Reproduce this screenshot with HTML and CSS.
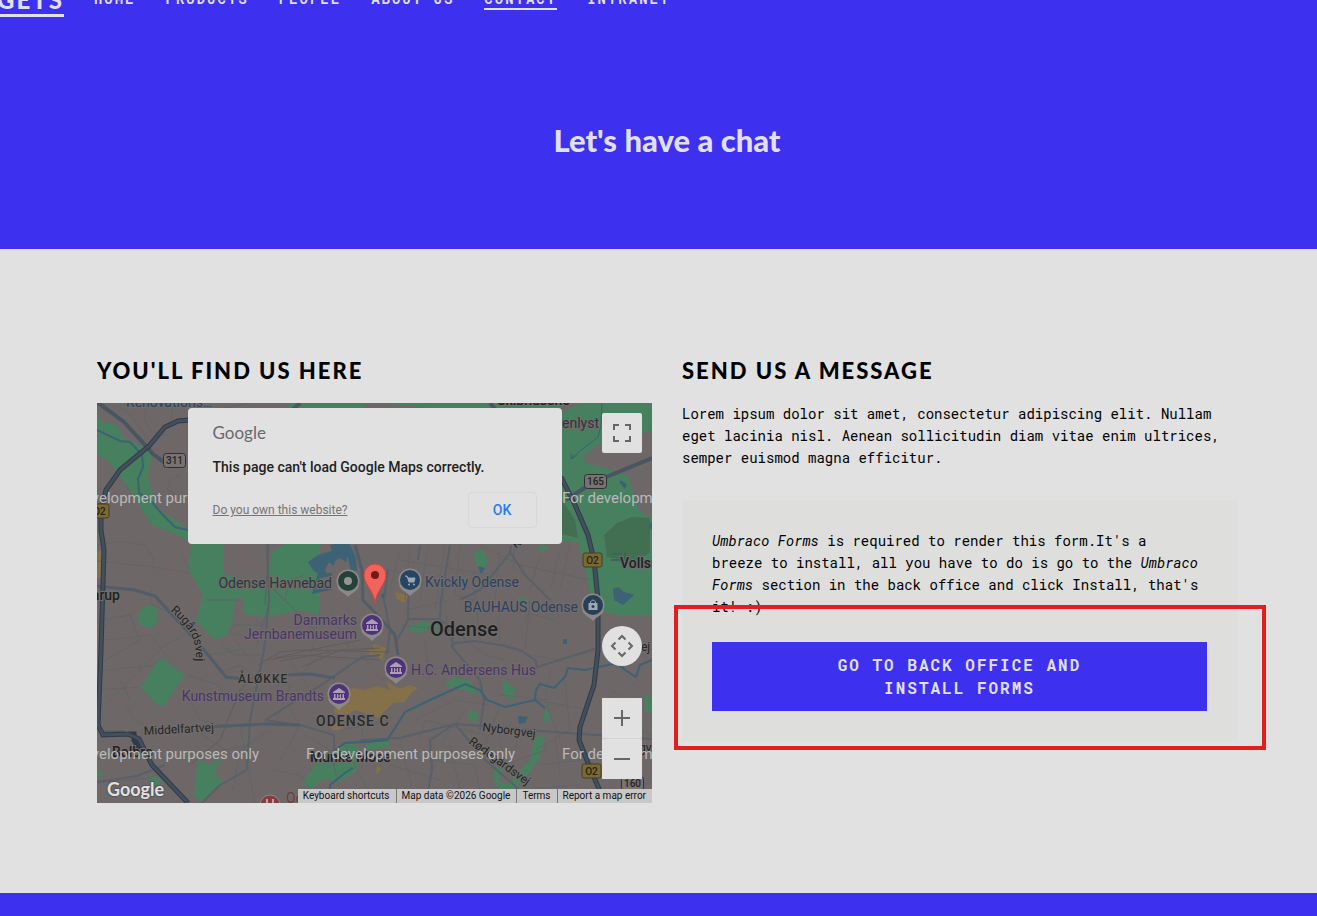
FILE: index.html
```html
<!DOCTYPE html>
<html lang="en">
<head>
<meta charset="utf-8">
<title>Contact</title>
<link rel="stylesheet" href="styles.css">
</head>
<body>
<header class="hero">
  <nav class="nav">
    <a class="logo" href="#">GETS</a>
    <a href="#">Home</a>
    <a href="#">Products</a>
    <a href="#">People</a>
    <a href="#">About us</a>
    <a class="active" href="#">Contact</a>
    <a href="#">Intranet</a>
  </nav>
  <h1 class="hero-title">Let's have a chat</h1>
</header>

<main class="content">
  <section class="column">
    <h2 class="heading">You'll find us here</h2>
    <div class="map">
      <svg class="map-canvas" viewBox="97 403 555 400" preserveAspectRatio="xMidYMid slice" role="img" aria-label="Map of Odense">
        <defs>
          <path id="rug" d="M170 611 Q188 626 192 637 Q196 645 196 660"/>
          <g id="drop"><path d="M-11 5C-9 11-3 12 0 16C3 12 9 11 11 5Z" fill="#8c8988"/><circle r="11.500" fill="#8c8988"/></g>
          <g id="museum"><use href="#drop"/><circle r="10" fill="#50327a"/><path d="M-6-2L0-6L6-2V-1H-6ZM-5 0H-3.500V4H-5ZM3.500 0H5V4H3.500ZM-6 4H6V6H-6ZM-2 0H-1V1.500H1V0H2V4H1V2.500H-1V4H-2Z" fill="#aaa1b5"/></g>
          <g id="o2"><rect width="19" height="14" rx="2" fill="#7a6930" stroke="#463e25"/><text x="9.500" y="11" text-anchor="middle" class="road-no gold">O2</text></g>
        </defs>
        <rect x="97" y="403" width="555" height="400" fill="#6d6867"/>
        <g fill="#47805f">
          <path d="M97 415L102 422L117 425L123 437L153 452L148 475L154 500L158 509L180 523L190 533V541L165 530L152 525L130 490L117 472L106 459L97 455Z"/>
          <path d="M290 403H368L360 412H288ZM378 403H652V433L605 440L583 457L587 464L650 470L628 474L639 510L652 518V616L641 616L620 616L600 611L590 596L586 570L578 542L562 541V420Z"/>
          <path d="M192 541H224V574L243 580H268L272 552L290 541H320V615L300 610L288 613L265 617L244 614L243 600L239 596L235 602L232 622L227 635L215 640L196 621L203 595L188 568Z"/>
          <path d="M139 612L147 605L158 608L156 616L159 618L152 629L138 624ZM160 657L185 675L170 696L165 706L156 704L141 687ZM197 769L198 760L210 765L222 758L214 774L223 782L213 790L202 802L194 796ZM97 770L103 772L97 780ZM150 774L162 780L158 786L149 782Z"/>
          <path d="M302 784L315 765L333 751L345 745L353 743L360 750L358 770L340 782L322 779L312 789ZM365 743L389 741V747L369 750ZM409 625L428 621L432 627L420 633L410 631ZM432 621L439 620L438 632L433 634ZM445 683L455 677L470 681L478 695L465 690L448 688ZM502 680L515 688L513 700L504 696ZM470 710L479 714L476 723L468 718ZM545 710L551 713L549 723L543 720ZM495 768L506 765L498 780L515 790L502 792L493 779ZM535 737L545 736L540 757L525 780L511 790L507 785L530 760ZM644 695L652 698V714L646 711ZM474 552L483 549L488 562L483 574L477 566ZM540 545L550 547L540 553ZM518 597L529 600L526 607L515 603Z"/>
        </g>
        <g fill="#6d6867">
          <path d="M583 457L605 440L632 437L652 430V465L628 475L622 474L597 465ZM628 475L652 466V519L639 510ZM560 403H582L562 413Z"/>
        </g>
        <path d="M562 500L575 520L578 538L562 534ZM604 535L617 523L632 517L650 518V552L637 562L607 557Z" fill="#426e52"/>
        <path d="M612 554H622M611 560H625V552" stroke="#3b6752" fill="none" stroke-width="2"/>
        <path d="M308 562L318 555L332 551L330 545L341 543L348 553L346 562L340 558L336 560L333 566L329 562L325 570L328 577L319 575L313 570ZM341 543L349 542L356 558L357 571L351 570L348 558ZM613 589L618 587L624 592L634 595L623 605L614 600ZM518 716L528 717L525 723L519 724ZM563 639H567V644H563ZM478 566L485 568L481 575ZM652 530L648 526L652 522ZM620 480L627 484L625 489L620 483ZM383 593L386 596L383 599L381 596Z" fill="#3b6275"/>
        <path d="M319 575L314 592L332 588M318 577L332 574" stroke="#3b6275" fill="none" stroke-width="3"/>
        <g fill="#84714a">
          <path d="M97 552L101 551V578L97 578ZM336 704L341 694L353 688L365 690L377 686L390 690L386 681L391 684L400 689L409 685L418 688L411 693L405 702L393 703L385 711L378 718L355 710L345 718L334 712ZM373 644L386 648L382 660L376 655ZM395 592L409 596L404 603L397 599ZM368 650H383V655H370Z"/>
          <path d="M332 724L340 723L344 730L332 730ZM377 765L381 769L376 774Z"/>
        </g>
        <g fill="none" stroke="#626468" stroke-width="1">
          <path d="M97 545L120 541L145 545L153 557V565M97 561L145 566L190 573M115 403L130 415L152 445M147 403L144 418L150 431L170 436M172 403V420M250 403L224 408M180 475L170 480L167 490L188 500M180 550L190 570M100 620L130 615L140 640L97 665M150 590L152 605L170 612M103 670L150 666L165 657M97 690L140 687M125 704L135 720L150 729M105 705L115 695L165 645L185 635M120 680L130 700M103 640L150 635L170 660M190 700L200 720L225 725M187 675L218 685L228 700M198 640L207 655L240 650M233 625H262L265 635H230ZM205 600L240 600M215 675L240 665L260 680M220 643L234 655H260M255 680L290 685L275 725M285 600L290 580L305 575M290 660L310 690L330 680M285 700L300 725L280 760M233 790L240 750L270 730M97 783L150 778L165 769M240 725L255 805M195 730L225 750L250 745M305 735L330 750L340 790M270 770L300 775L320 802M345 745L375 805M400 550L390 590M400 560L490 575M410 545L405 600M428 545L420 600M445 545L435 610M460 545L455 595M390 570L480 590M500 550L495 600M480 545L520 565M515 545L513 570M540 555L530 590M560 550L550 590M570 545L560 590M520 565L590 580M455 595L555 620M440 575L450 640M475 590L480 640M498 600L500 640M530 600L525 650M405 610L450 600M400 625L470 632M460 635L485 655L505 660M495 640L530 655L560 660M380 680L420 670L470 665M425 640L430 680M415 720L455 700L490 705M420 740L425 720L485 735M440 745L465 710M450 745L460 790M487 740L500 705M430 760L475 765L480 790M390 765L440 780M400 740L415 800M500 740L505 765L545 750M520 725L515 750M535 700L590 710M550 675L545 700L560 740M565 680L570 730L535 750M500 695L550 700M515 790L580 785M540 765L585 760M555 735L560 775M450 790L520 803M610 690L640 705M605 640L652 650M610 660L640 690M605 715L652 735M602 740L640 790M620 800L652 780M320 655L300 675M350 640L370 665M330 610L350 650M270 600L255 650M235 640L250 660M255 620L290 640M320 610L310 660M340 730L390 720M360 720L365 750M390 790L440 800M305 790L330 800"/>
        </g>
        <g fill="none" stroke="#58606a" stroke-width="2">
          <path d="M267 541L269 600L264 650L250 720L247 770M388 569L384 600L390 630L387 655M409 575L408 620L396 642M409 619L440 619L453 630L452 647L480 680L484 700L480 730M452 647L455 643L475 641L500 645L520 650L535 660L537 667L598 648M265 720L320 686L362 657L380 655M265 720L300 725L334 735L334 765M360 740L400 738L455 724L485 726L540 731L652 739M455 724L430 740L432 770L426 803M455 724L485 760L535 803M420 545L418 560M511 545L510 553L480 590L460 600M511 553L525 575L550 600M247 770L220 785L202 803M97 782L137 776L165 765M440 619L441 600L450 545"/>
        </g>
        <path d="M97 586L135 590L155 596L177 620L200 645L226 677L242 679M282 675L310 674L335 678M103 732L125 732M208 727L265 724L300 725M355 545L362 570L363 600L380 618L395 635L398 655" fill="none" stroke="#515d69" stroke-width="3"/>
        <path d="M269 541L265 605M269 585L305 620L320 635M258 665L280 652L300 650L390 652M265 660L300 655L380 660M275 658L310 650L360 640M280 661L330 652M302 667L340 650L380 648M260 670L240 690L220 740L190 765" fill="none" stroke="#605d5d" stroke-width="1"/>
        <path d="M97 430L120 441L130 442L142 455L143 467L138 479L139 493L150 500L162 514L175 527L188 530M329 803L330 785L345 773L353 768M335 750L345 743L365 742L387 740L395 728L405 712L430 700L465 684L480 690L487 700L505 707L535 700L545 708M535 700L536 690L540 684L554 688L565 677L568 668L585 670L617 663L625 670L636 677L640 665L652 660" fill="none" stroke="#3b6275" stroke-width="2"/>
        <path d="M602 403L601 425L598 437L570 459M571 453L572 459L577 455" fill="none" stroke="#3b6275"/>
        <path d="M97 402L124 422L145 445L153 454L165 463M300 403L292 410M566 500L592 483L652 458M490 403L495 409" fill="none" stroke="#495563" stroke-width="4"/>
        <path d="M190 420L178 421L165 427L149 446L120 470L106 490L101 510V530L104 550L101 650L98 725L103 735L128 734L139 739L152 765L188 803M128 734H134V740L139 750" fill="none" stroke="#303a47" stroke-width="5"/>
        <path d="M190 420L178 421L165 427L149 446L120 470L106 490L101 510V530L104 550L101 650L98 725L103 735L128 734L139 739L152 765L188 803" fill="none" stroke="#444f5d" stroke-width="3"/>
        <path d="M561 477L575 505L588 535L594 560L598 600V650L594 685L580 727L579 740L588 763L605 803" fill="none" stroke="#303a47" stroke-width="5"/>
        <path d="M561 477L575 505L588 535L594 560L598 600V650L594 685L580 727L579 740L588 763L605 803" fill="none" stroke="#444f5d" stroke-width="3"/>

        <g class="labels">
          <text x="126" y="407" class="shop">Renovations…</text>
          <text x="497" y="405" class="town">Skibhusene</text>
          <text x="562" y="428" class="place">enlyst</text>
          <text x="620" y="568" class="town">Vollsmose</text>
          <text x="120" y="600" text-anchor="end" class="town">Tarup</text>
          <text x="112" y="757" class="town">Bolbro</text>
          <text x="310" y="762" class="town">Munke Mose</text>
          <text x="332" y="588" text-anchor="end" class="place">Odense Havnebad</text>
          <text x="425" y="587" class="shop">Kvickly Odense</text>
          <text x="578" y="612" text-anchor="end" class="shop">BAUHAUS Odense</text>
          <text x="357" y="625" text-anchor="end" class="sight">Danmarks</text>
          <text x="357" y="639" text-anchor="end" class="sight">Jernbanemuseum</text>
          <text x="411" y="675" class="sight">H.C. Andersens Hus</text>
          <text x="324" y="701" text-anchor="end" class="sight">Kunstmuseum Brandts</text>
          <text x="286" y="803" class="clinic">Odense</text>
          <text x="430" y="636" class="city">Odense</text>
          <text x="316" y="726" class="district">ODENSE C</text>
          <text x="238" y="683" class="quarter">ÅLØKKE</text>
          <text class="street"><textPath href="#rug">Rugårdsvej</textPath></text>
          <text x="144" y="735" class="street" transform="rotate(-3 144 735)">Middelfartvej</text>
          <text x="482" y="731" class="street" transform="rotate(7 482 731)">Nyborgvej</text>
          <text x="468" y="743" class="street" transform="rotate(36 468 743)">Rødegårdsvej</text>
          <text x="641" y="651" class="street">ej</text>
          <text x="639" y="752" class="street">gvej</text>
          <text x="516" y="549" class="street" transform="rotate(-40 516 549)">K</text>
        </g>
        <g stroke="#30302f"><rect x="163.500" y="453.500" width="22" height="14" rx="3" fill="#777372"/><rect x="584.500" y="474.500" width="22" height="14" rx="3" fill="#777372"/><rect x="621.500" y="776.500" width="22" height="14" rx="3" fill="#777372"/></g>
        <text x="174.500" y="464" text-anchor="middle" class="road-no">311</text>
        <text x="595.500" y="485" text-anchor="middle" class="road-no">165</text>
        <text x="632.500" y="787" text-anchor="middle" class="road-no">160</text>
        <use href="#o2" x="583" y="553"/><use href="#o2" x="582" y="764"/><use href="#o2" x="90" y="504"/>

        <g transform="translate(348 581)"><use href="#drop"/><circle r="10" fill="#24413a"/><circle r="4" fill="#969492"/></g>
        <g transform="translate(410 580)"><use href="#drop"/><circle r="10" fill="#254564"/><path d="M-5-4H-3L-1 2H4L5-2H-2" fill="#a1a7b0" stroke="#a1a7b0"/><circle cx="-1" cy="4.500" r="1" fill="#a1a7b0"/><circle cx="4" cy="4.500" r="1" fill="#a1a7b0"/></g>
        <g transform="translate(593 605)"><use href="#drop"/><circle r="10" fill="#254057"/><path d="M-4.500-2H4.500V5H-4.500Z" fill="#a1a7b0"/><path d="M-2.500-2V-3Q0-7 2.500-3V-2" fill="none" stroke="#a1a7b0"/><circle cy="1.500" r="1.500" fill="#254057"/></g>
        <use href="#museum" x="372" y="625"/><use href="#museum" x="396" y="668"/><use href="#museum" x="339" y="694"/>
        <circle cx="270" cy="805" r="10" fill="#873d40" stroke="#8c8988"/><path d="M267 799V803M273 799V803" stroke="#b7a2a2" stroke-width="2"/>
        <path d="M375 604C374 590 364 585 364 575A11 11 0 0 1 386 575C386 585 376 590 375 604Z" fill="#f4635b" stroke="#c9453e"/>
        <circle cx="375" cy="575" r="4" fill="#721b17"/>
        <g class="watermark">
          <text x="50" y="503">For development purposes only</text><text x="562" y="503">For development purposes only</text>
          <text x="50" y="759">For development purposes only</text><text x="306" y="759">For development purposes only</text><text x="562" y="759">For development purposes only</text>
        </g>
        <text x="107" y="796" class="map-logo">Google</text>
      </svg>

      <div class="dialog" role="dialog" aria-label="Google Maps error">
        <div class="dialog-brand">Google</div>
        <p class="dialog-text">This page can't load Google Maps correctly.</p>
        <div class="dialog-row">
          <a class="dialog-link" href="#">Do you own this website?</a>
          <button class="dialog-ok" type="button">OK</button>
        </div>
      </div>

      <div class="controls">
        <button class="control" type="button" aria-label="Toggle fullscreen view">
          <svg width="40" height="40" viewBox="0 0 40 40"><path d="M12 17V12H17M23 12H28V17M28 23V28H23M17 28H12V23" fill="none" stroke="#666" stroke-width="2"/></svg>
        </button>
        <div class="controls-lower">
          <button class="control round" type="button" aria-label="Map camera controls">
            <svg width="40" height="40" viewBox="0 0 40 40"><path d="M16.500 13.500L20 10L23.500 13.500M26.500 16.500L30 20L26.500 23.500M23.500 26.500L20 30L16.500 26.500M13.500 23.500L10 20L13.500 16.500" fill="none" stroke="#666" stroke-width="2"/></svg>
          </button>
          <div class="zoom">
            <button class="control" type="button" aria-label="Zoom in"><svg width="40" height="40" viewBox="0 0 40 40"><path d="M12 20H28M20 12V28" stroke="#666" stroke-width="2"/></svg></button>
            <button class="control" type="button" aria-label="Zoom out"><svg width="40" height="40" viewBox="0 0 40 40"><path d="M12 20H28" stroke="#666" stroke-width="2"/></svg></button>
          </div>
        </div>
      </div>

      <div class="credits">
        <button type="button">Keyboard shortcuts</button>
        <span>Map data ©2026 Google</span>
        <a href="#">Terms</a>
        <a href="#">Report a map error</a>
      </div>
    </div>
  </section>

  <section class="column">
    <h2 class="heading">Send us a message</h2>
    <p class="text">Lorem ipsum dolor sit amet, consectetur adipiscing elit. Nullam eget lacinia nisl. Aenean sollicitudin diam vitae enim ultrices, semper euismod magna efficitur.</p>
    <div class="notice">
      <p class="text notice-text"><em>Umbraco Forms</em> is required to render this form.It's a breeze to install, all you have to do is go to the <em>Umbraco Forms</em> section in the back office and click Install, that's it! :)</p>
      <a class="install" href="#">Go to back office and install Forms</a>
      <div class="highlight"></div>
    </div>
  </section>
</main>
<footer class="footer"></footer>
</body>
</html>
```

FILE: styles.css
```css
* { box-sizing: border-box; }

body {
  margin: 0;
  min-height: 100vh;
  display: flex;
  flex-direction: column;
  overflow-x: hidden;
  background: #e1e1e1;
  color: #000;
  font-family: "Roboto Mono", "Liberation Mono", monospace;
  font-size: 14px;
  line-height: 22px;
}

button { margin: 0; padding: 0; border: 0; font: inherit; color: inherit; cursor: pointer; }

.hero {
  height: 249px;
  overflow: hidden;
  background: #3d30ef;
  color: #e1dff2;
}

.nav {
  display: flex;
  align-items: flex-end;
  gap: 30px;
  height: 36px;
  margin: -19px 0 0 -3px;
}

.nav a {
  margin-bottom: 7px;
  border-bottom: 2px solid transparent;
  color: inherit;
  font-weight: 700;
  line-height: 18px;
  letter-spacing: 2px;
  text-transform: uppercase;
  text-decoration: none;
  white-space: nowrap;
}

.nav .active { border-bottom-color: #e1dff2; }

.nav .logo {
  margin-bottom: 0;
  border-bottom: 3px solid #e1dff2;
  font: 900 24px/28px Lato, sans-serif;
  letter-spacing: 2px;
}

.hero-title {
  margin: 103px 80px 0 97px;
  font: 900 31px/40px Lato, sans-serif;
  text-align: center;
}

.content {
  display: grid;
  grid-template-columns: 1fr 1fr;
  gap: 30px;
  padding: 110px 80px 90px 97px;
}

.heading {
  margin: 0 0 20px;
  font: 900 22px/24px Lato, sans-serif;
  letter-spacing: 2px;
  text-transform: uppercase;
}

.text { margin: 0; }

.map {
  position: relative;
  height: 400px;
  overflow: hidden;
  font-family: Roboto, sans-serif;
}

.map-canvas { display: block; width: 100%; height: 100%; }

.labels text { font-size: 14px; paint-order: stroke; stroke: #716d6c; stroke-width: 2px; }
.labels .place { fill: #2f353b; }
.labels .shop { fill: #2b405f; }
.labels .sight { fill: #4a3469; }
.labels .clinic { fill: #72383c; }
.labels .town { fill: #202124; font-weight: 500; }
.labels .city { fill: #1e1f21; font-size: 20px; font-weight: 500; }
.labels .district { fill: #292929; font-weight: 500; letter-spacing: 1px; }
.labels .quarter { fill: #292929; font-size: 12px; font-weight: 500; letter-spacing: 1px; }
.labels .street { fill: #242424; font-size: 12px; }
.road-no { fill: #242424; font-size: 10px; font-weight: 500; }
.gold { fill: #282313; }
.watermark { fill: #bbb9b8; font-family: Roboto, sans-serif; font-size: 15px; }

.map-logo {
  fill: #e1e1e1;
  stroke: #555;
  stroke-width: 2px;
  paint-order: stroke;
  font: 700 18px Lato, sans-serif;
}

.dialog {
  position: absolute;
  top: 5px;
  left: 50%;
  width: 374px;
  margin-left: -187px;
  padding: 14px 25px 16px;
  border-radius: 4px;
  background: #e1e1e1;
  color: #222;
}

.dialog-brand { color: #66696d; font: 400 17px/22px Lato, sans-serif; }
.dialog-text { margin: 13px 0 15px; font-weight: 500; line-height: 20px; }
.dialog-row { display: flex; align-items: center; justify-content: space-between; }
.dialog-link { color: #757575; font-size: 12px; }

.dialog-ok {
  width: 69px;
  height: 36px;
  border: 1px solid #d8d8d8;
  border-radius: 4px;
  background: none;
  color: #2b7de9;
  font-weight: 500;
}

.controls {
  position: absolute;
  top: 10px;
  right: 10px;
  bottom: 24px;
  display: flex;
  flex-direction: column;
  justify-content: space-between;
}

.controls-lower { display: grid; gap: 32px; }
.control { display: block; width: 40px; height: 40px; border-radius: 2px; background: #e1e1e1; }
.control svg { display: block; }
.round { border-radius: 50%; }
.zoom { display: grid; gap: 1px; background: #d2d2d2; }

.credits {
  position: absolute;
  right: 0;
  bottom: 0;
  display: flex;
  background: #c9c8c8;
  color: #111;
  font-size: 10px;
  line-height: 14px;
}

.credits > * { padding: 0 6px 0 5px; border-left: 1px solid #777; background: none; color: inherit; text-decoration: none; }
.credits > :first-child { border-left: 0; }

.notice {
  position: relative;
  margin-top: 31px;
  padding: 30px;
  background: #dededc;
}

.notice-text { padding-right: 4px; }

.install {
  display: block;
  margin-top: 24px;
  padding: 11px 90px 12px;
  background: #3d30ef;
  color: #e1dff2;
  font-size: 16px;
  font-weight: 700;
  line-height: 23px;
  letter-spacing: 2px;
  text-align: center;
  text-transform: uppercase;
  text-decoration: none;
}

.highlight {
  position: absolute;
  top: 105px;
  right: -29px;
  bottom: -9px;
  left: -8px;
  border: 4px solid #e02020;
  pointer-events: none;
}

.footer { flex: 1 0 23px; background: #3d30ef; }
```
